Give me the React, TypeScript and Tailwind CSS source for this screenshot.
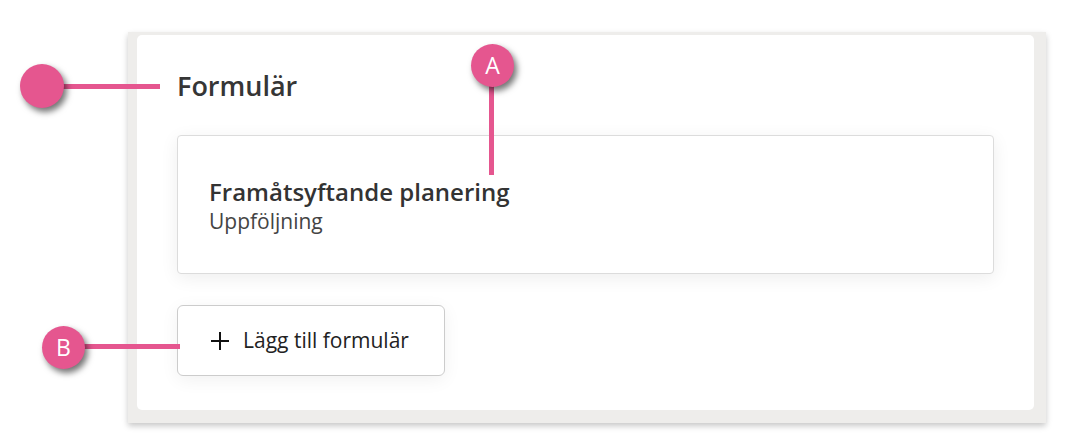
import React from "react";

function Dot({ className, label }: { className: string; label?: string }) {
  return (
    <div
      className={
        "absolute rounded-full bg-[#e5568f] shadow-[3px_4px_6px_rgba(0,0,0,0.55)] flex items-center justify-center text-white text-[23px] leading-none " +
        className
      }
    >
      {label}
    </div>
  );
}

export default function App() {
  return (
    <div
      className="relative w-[1069px] h-[448px] bg-white overflow-hidden"
      style={{ fontFamily: '"Open Sans", "Noto Sans", sans-serif' }}
    >
      <div className="pt-[32px] pl-[128px]">
        <div className="w-[918px] h-[391px] bg-[#eeedeb] pt-[3px] pl-[9px] pr-[12px] pb-[13px] shadow-[0_3px_6px_rgba(0,0,0,0.22)]">
          <div className="h-full bg-white rounded-[5px] pt-[33px] px-[40px]">
            <h2 className="text-[27px] leading-[36px] font-semibold text-[#363636]">Formulär</h2>
            <div className="mt-[31px] h-[139px] border border-[#dcdcdc] rounded-[4px] bg-white shadow-[0_4px_18px_rgba(0,0,0,0.07)] pt-[41px] px-[31px]">
              <div className="text-[24px] leading-[30px] font-semibold text-[#333333]">Framåtsyftande planering</div>
              <div className="text-[21px] leading-[28px] text-[#444444]">Uppföljning</div>
            </div>
            <button className="mt-[31px] w-[268px] h-[71px] border border-[#cccccc] rounded-[6px] bg-white shadow-[0_4px_18px_rgba(0,0,0,0.06)] flex items-center pl-[33px] gap-[14px] text-[21px] text-[#222222]">
              <svg width="18" height="18" viewBox="0 0 18 18" className="shrink-0">
                <path d="M9 0V18M0 9H18" stroke="#111" strokeWidth="2" />
              </svg>
              <span>Lägg till formulär</span>
            </button>
          </div>
        </div>
      </div>

      {/* annotation 1 */}
      <div className="absolute left-[60px] top-[84px] w-[100px] h-[5px] bg-[#e5568f]" />
      <Dot className="left-[20px] top-[64px] w-[44px] h-[44px]" />

      {/* annotation A */}
      <div className="absolute left-[489px] top-[80px] w-[5px] h-[95px] bg-[#e5568f]" />
      <Dot className="left-[471px] top-[44px] w-[43px] h-[43px]" label="A" />

      {/* annotation B */}
      <div className="absolute left-[80px] top-[344px] w-[100px] h-[5px] bg-[#e5568f]" />
      <Dot className="left-[42px] top-[326px] w-[43px] h-[43px]" label="B" />
    </div>
  );
}
